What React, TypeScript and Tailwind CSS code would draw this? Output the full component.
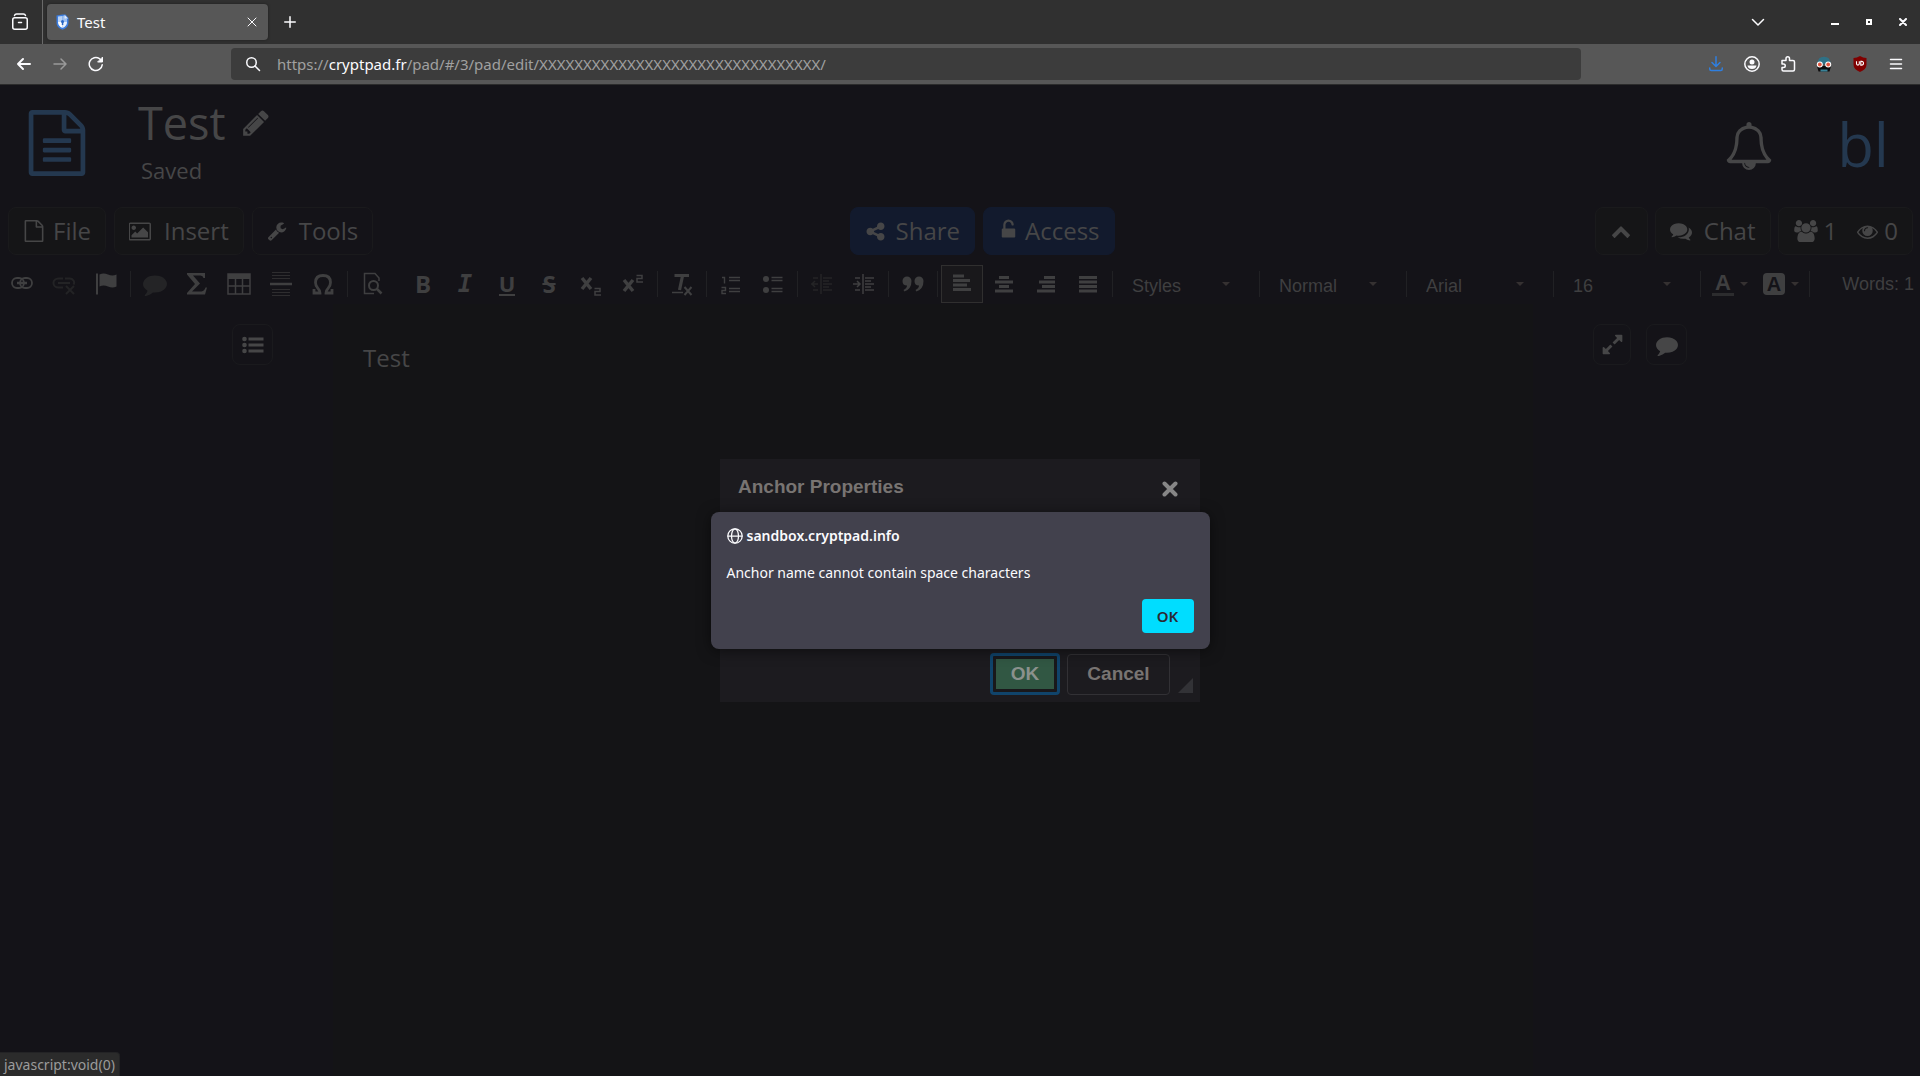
import type { ReactNode } from "react";

const paths = {
  file: "M1596 380q28 28 48 76t20 88v1152q0 40-28 68t-68 28h-1344q-40 0-68-28t-28-68v-1600q0-40 28-68t68-28h896q40 0 88 20t76 48zm-444-244v376h376q-10-29-22-41l-313-313q-12-12-41-22zm384 1528v-1024h-416q-40 0-68-28t-28-68v-416h-768v1536h1280z",
  fileLines:
    "M512 800q0-14 9-23t23-9h704q14 0 23 9t9 23v64q0 14-9 23t-23 9h-704q-14 0-23-9t-9-23v-64zm736 224q14 0 23 9t9 23v64q0 14-9 23t-23 9h-704q-14 0-23-9t-9-23v-64q0-14 9-23t23-9h704zm0 256q14 0 23 9t9 23v64q0 14-9 23t-23 9h-704q-14 0-23-9t-9-23v-64q0-14 9-23t23-9h704z",
  pencil:
    "M491 1536l91-91-235-235-91 91v107h128v128h107zm523-928q0-22-22-22-10 0-17 7l-542 542q-7 7-7 17 0 22 22 22 10 0 17-7l542-542q7-7 7-17zm-54-192l416 416-832 832h-416v-416zm683 96q0 53-37 90l-166 166-416-416 166-165q36-38 90-38 53 0 91 38l235 234q37 39 37 91z",
  picture:
    "M576 576q0 80-56 136t-136 56-136-56-56-136 56-136 136-56 136 56 56 136zm1024 384v448h-1408v-192l320-320 160 160 512-512zm96-704h-1600q-13 0-22.500 9.500t-9.500 22.500v1216q0 13 9.500 22.500t22.500 9.500h1600q13 0 22.500-9.500t9.500-22.500v-1216q0-13-9.500-22.500t-22.500-9.500zm160 32v1216q0 66-47 113t-113 47h-1600q-66 0-113-47t-47-113v-1216q0-66 47-113t113-47h1600q66 0 113 47t47 113z",
  wrench:
    "M448 1472q0-26-19-45t-45-19-45 19-19 45 19 45 45 19 45-19 19-45zm644-420l-682 682q-37 37-90 37-52 0-91-37l-106-108q-38-36-38-90 0-53 38-91l681-681q39 98 114.500 173.500t173.500 114.500zm634-435q0 39-23 106-47 134-164.500 217.500t-258.500 83.500q-185 0-316.500-131.500t-131.500-316.500 131.500-316.500 316.500-131.500q58 0 121.500 16.500t107.500 46.500q16 11 16 28t-16 28l-293 169v224l193 107q5-3 79-48.500t135.500-81 70.500-35.500q15 0 23.500 10t8.500 25z",
  share:
    "M1344 1024q133 0 226.500 93.500t93.500 226.500-93.500 226.500-226.500 93.500-226.500-93.500-93.500-226.500q0-12 2-34l-360-180q-92 86-218 86-133 0-226.500-93.500t-93.500-226.500 93.500-226.500 226.500-93.500q126 0 218 86l360-180q-2-22-2-34 0-133 93.500-226.500t226.500-93.500 226.500 93.500 93.500 226.500-93.500 226.500-226.500 93.500q-126 0-218-86l-360 180q2 22 2 34t-2 34l360 180q92-86 218-86z",
  unlock:
    "M1376 896q40 0 68 28t28 68v576q0 40-28 68t-68 28h-960q-40 0-68-28t-28-68v-576q0-40 28-68t68-28h32v-320q0-185 131.500-316.500t316.500-131.500 316.500 131.500 131.500 316.500q0 26-19 45t-45 19h-64q-26 0-45-19t-19-45q0-106-75-181t-181-75-181 75-75 181v320h736z",
  chevronUp:
    "M1683 1331l-166 165q-19 19-45 19t-45-19l-531-531-531 531q-19 19-45 19t-45-19l-166-165q-19-19-19-45.500t19-45.500l742-741q19-19 45-19t45 19l742 741q19 19 19 45.500t-19 45.500z",
  comment:
    "M1792 896q0 174-120 321.500t-326 233-450 85.500q-70 0-145-8-198 175-460 242-49 14-114 22-17 2-30.500-9t-17.500-29v-1q-3-4-.500-12t2-10 4.500-9.500l6-9 7-8.500 8-9q7-8 31-34.500t34.500-38 31-39.500 32.500-51 27-59 26-76q-157-89-247.500-220t-90.500-281q0-130 71-248.500t191-204.500 286-136.500 348-50.500q244 0 450 85.500t326 233 120 321.500z",
  comments:
    "M1408 768q0 139-94 257t-256.500 186.500-353.500 68.500q-86 0-176-16-124 88-278 128-36 9-86 16h-3q-11 0-20.500-8t-11.500-21q-1-3-1-6.500t.500-6.500 2-6l2.500-5 3.500-5.500 4-5 4.500-5 4-4.500q5-6 23-25t26-29.500 22.500-29 25-38.500 20.500-44q-124-72-195-177t-71-224q0-139 94-257t256.500-186.500 353.500-68.500 353.500 68.500 256.500 186.500 94 257zm384 256q0 120-71 224.500t-195 176.500q10 24 20.500 44t25 38.500 22.500 29 26 29.500 23 25q1 1 4 4.500t4.500 5 4 5 3.500 5.500l2.500 5 2 6 .500 6.500-1 6.500q-3 14-13 22t-22 7q-50-7-86-16-154-40-278-128-90 16-176 16-271 0-472-132 58 4 88 4 161 0 309-45t264-129q125-92 192-212t67-254q0-77-23-152 129 71 204 178t75 230z",
  eye: "M1664 960q-152-236-381-353 61 104 61 225 0 185-131.500 316.500t-316.500 131.500-316.500-131.500-131.500-316.500q0-121 61-225-229 117-381 353 133 205 333.500 326.500t434.500 121.500 434.500-121.500 333.500-326.500zm-720-384q0-20-14-34t-34-14q-125 0-214.500 89.500t-89.500 214.500q0 20 14 34t34 14 34-14 14-34q0-86 61-147t147-61q20 0 34-14t14-34zm848 384q0 34-20 69-140 230-376.500 368.500t-499.500 138.500-499.500-139-376.500-368q-20-35-20-69t20-69q140-229 376.500-368t499.500-139 499.500 139 376.500 368q20 35 20 69z",
  bell: "M912 1696q0-16-16-16-59 0-101.500-42.500t-42.500-101.500q0-16-16-16t-16 16q0 73 51.500 124.500t124.500 51.500q16 0 16-16zm-666-288h1300q-266-300-266-832 0-51-24-105t-69-103-121.500-80.500-169.500-31.500-169.500 31.500-121.500 80.500-69 103-24 105q0 532-266 832zm1482 0q0 52-38 90t-90 38h-448q0 106-75 181t-181 75-181-75-75-181h-448q-52 0-90-38t-38-90q50-42 91-88t85-119.500 74.500-158.500 50-206 19.500-260q0-152 117-282.500t307-158.500q-8-19-8-39 0-40 28-68t68-28 68 28 28 68q0 20-8 39 190 28 307 158.500t117 282.500q0 139 19.500 260t50 206 74.500 158.500 85 119.500 91 88z",
  users:
    "M593 896q-162 5-265 128h-134q-82 0-138-40.500t-56-118.500q0-353 124-353 6 0 43.500 21t97.500 42.500 119 21.500q67 0 133-23-5 37-5 66 0 139 81 256zm1071 637q0 120-73 189.500t-194 69.500h-874q-121 0-194-69.500t-73-189.500q0-53 3.500-103.500t14-109 26.500-108.500 43-97.500 62-81 85.500-53.500 111.500-20q10 0 43 21.500t73 48 107 48 135 21.500 135-21.500 107-48 73-48 43-21.500q61 0 111.500 20t85.500 53.500 62 81 43 97.500 26.500 108.500 14 109 3.500 103.500zm-1024-1277q0 106-75 181t-181 75-181-75-75-181 75-181 181-75 181 75 75 181zm704 384q0 159-112.500 271.500t-271.500 112.500-271.500-112.500-112.500-271.500 112.500-271.500 271.500-112.500 271.500 112.500 112.500 271.500zm576 225q0 78-56 118.500t-138 40.500h-134q-103-123-265-128 81-117 81-256 0-29-5-66 66 23 133 23 59 0 119-21.500t97.500-42.500 43.500-21q124 0 124 353zm-128-609q0 106-75 181t-181 75-181-75-75-181 75-181 181-75 181 75 75 181z",
  expand:
    "M883 1056q0 13-10 23l-332 332 144 144q19 19 19 45t-19 45-45 19h-448q-26 0-45-19t-19-45v-448q0-26 19-45t45-19 45 19l144 144 332-332q10-10 23-10t23 10l114 114q10 10 10 23zm781-864v448q0 26-19 45t-45 19-45-19l-144-144-332 332q-10 10-23 10t-23-10l-114-114q-10-10-10-23t10-23l332-332-144-144q-19-19-19-45t19-45 45-19h448q26 0 45 19t19 45z",
};

function Fa({ d, w = 1792, className = "size-6" }: { d: string; w?: number; className?: string }) {
  return (
    <svg viewBox={`0 0 ${w} 1792`} fill="currentColor" aria-hidden="true" className={`${className} shrink-0`}>
      <path d={d} />
    </svg>
  );
}

function Line({ children, size = 16, sw = 1.5 }: { children: ReactNode; size?: number; sw?: number }) {
  return (
    <svg
      width={size}
      height={size}
      viewBox={`0 0 ${size} ${size}`}
      fill="none"
      stroke="currentColor"
      strokeWidth={sw}
      strokeLinecap="round"
      strokeLinejoin="round"
      aria-hidden="true"
      className="shrink-0"
    >
      {children}
    </svg>
  );
}

function ChromeButton({ label, children, className = "w-9 text-[#fbfbfe]" }: { label: string; children: ReactNode; className?: string }) {
  return (
    <button type="button" aria-label={label} className={`flex h-9 shrink-0 items-center justify-center ${className}`}>
      {children}
    </button>
  );
}

function TabStrip() {
  return (
    <div className="flex h-11 items-center bg-[#303030] text-[#fbfbfe]">
      <ChromeButton label="View recent browsing" className="w-10">
        <Line size={18}>
          <path d="M3.500 2.500Q4 1 5.500 1h7q1.500 0 2 1.500" />
          <rect x="1.750" y="4.750" width="14.500" height="11.500" rx="2" />
          <path d="M7.500 9.500h3" />
        </Line>
      </ChromeButton>
      <div className="ml-0.5 h-11 w-px bg-[#6a6a6a]" />
      <div className="ml-1 flex h-9 w-[221px] items-center rounded bg-[#575757] pr-2 pl-[9px] shadow-[0_0_3px_#00000066]">
        <svg width="13" height="16" viewBox="0 0 13 16" aria-hidden="true">
          <path d="M.5 1.500 6.500.5h3L12.500 4v5q0 4.500-6 6.700Q.5 13.500.5 9z" fill="#3b7de0" />
          <path d="M2 2.500 6.500 2v6H2z" fill="#b9d3f7" />
          <path d="M6.500 8H11q0 4-4.500 6z" fill="#e8f0fc" />
          <path d="M2 8h4.500v6Q2 12 2 8z" fill="#fff" />
          <path d="M6.500 2 8 1.500 11 5v3H6.500z" fill="#9dc0f2" />
          <path d="M8.500.8 12.200 4.500H8.500z" fill="#dfeafb" />
          <circle cx="6.500" cy="7.500" r="1.500" fill="#2765c4" />
          <path d="M5.800 8h1.500v3H5.800z" fill="#2765c4" />
        </svg>
        <span className="ml-2 flex-1 text-[15px] leading-5">Test</span>
        <button type="button" aria-label="Close tab" className="flex size-4 items-center justify-center">
          <Line size={10} sw={1}>
            <path d="M1 1l8 8M9 1L1 9" />
          </Line>
        </button>
      </div>
      <ChromeButton label="New tab" className="ml-1 w-9">
        <Line size={12}>
          <path d="M6 .75v10.500M.75 6h10.500" />
        </Line>
      </ChromeButton>
      <ChromeButton label="List all tabs" className="ml-auto w-9">
        <Line size={14}>
          <path d="M1.500 4.500 7 10l5.500-5.500" />
        </Line>
      </ChromeButton>
      <div className="ml-[42px] flex">
        <ChromeButton label="Minimize" className="w-[34px]">
          <span className="mt-1 h-0.5 w-2 bg-white" />
        </ChromeButton>
        <ChromeButton label="Maximize" className="w-[34px]">
          <span className="size-1.5 border-2 border-white" />
        </ChromeButton>
        <ChromeButton label="Close window" className="w-[34px]">
          <Line size={8} sw={2}>
            <path d="M1 1l6 6M7 1L1 7" />
          </Line>
        </ChromeButton>
      </div>
    </div>
  );
}

function NavBar() {
  return (
    <div className="flex h-[41px] items-center border-b border-[#2c2c2c] bg-[#575757] px-1.5">
      <ChromeButton label="Back">
        <Line sw={2}>
          <path d="M14 8H2M7 3L2 8l5 5" />
        </Line>
      </ChromeButton>
      <ChromeButton label="Forward" className="w-9 text-[#9a9a9a]">
        <Line>
          <path d="M2 8h12M9 3l5 5-5 5" />
        </Line>
      </ChromeButton>
      <ChromeButton label="Reload">
        <Line>
          <path d="M14.200 8.800A6.500 6.500 0 1 1 11.500 2.700L13 4" />
          <path d="M14.500 1.500v4.500H10z" fill="currentColor" strokeWidth="1" />
        </Line>
      </ChromeButton>
      <div className="mr-[117px] ml-[117px] flex h-8 flex-1 items-center rounded bg-[#3c3c3c] pl-[14px] text-[#fbfbfe]">
        <Line>
          <circle cx="6.500" cy="6.500" r="4.750" />
          <path d="M10 10l4.500 4.500" />
        </Line>
        <div
          role="textbox"
          aria-label="Address"
          contentEditable
          suppressContentEditableWarning
          className="ml-4 flex-1 text-[15px] leading-5 text-[#a0a0a0] outline-none"
        >
          https://<span className="text-[#fbfbfe]">cryptpad.fr</span>/pad/#/3/pad/edit/XXXXXXXXXXXXXXXXXXXXXXXXXXXXXXXX/
        </div>
      </div>
      <ChromeButton label="Downloads" className="w-9 text-[#2f7fe0]">
        <Line>
          <path d="M8 .75V10M4 6.500 8 10.500l4-4M1.750 12v1q0 1.500 1.500 1.500h9.500q1.500 0 1.500-1.500v-1" />
        </Line>
      </ChromeButton>
      <ChromeButton label="Account">
        <Line>
          <circle cx="8" cy="8" r="7.200" />
          <circle cx="8" cy="6" r="2.500" fill="currentColor" stroke="none" />
          <path d="M3.500 9.500h9q-.5 3.500-4.500 3.500t-4.500-3.500z" fill="currentColor" stroke="none" />
        </Line>
      </ChromeButton>
      <ChromeButton label="Extensions">
        <Line>
          <path d="M2 4.500h4V2.500a1.750 1.750 0 0 1 3.500 0v2h3.500q1.500 0 1.500 1.500v7.500q0 1.500-1.500 1.500H3.500Q2 15 2 13.500V11.500h1.500a1.700 1.700 0 0 0 0-3.500H2z" />
        </Line>
      </ChromeButton>
      <ChromeButton label="Privacy extension">
        <svg width="16" height="16" viewBox="0 0 16 16" aria-hidden="true">
          <path d="M1.500 8Q1.500.8 8 .8T14.500 8z" fill="#2f7186" />
          <path d="M1 10h14l-1.500 5.500h-11z" fill="#0c0c0d" />
          <circle cx="3.800" cy="8.500" r="3" fill="#fff" />
          <circle cx="12.200" cy="8.500" r="3" fill="#fff" />
          <circle cx="3.800" cy="8.500" r="1.900" fill="#e0553f" />
          <circle cx="12.200" cy="8.500" r="1.900" fill="#e0553f" />
          <path d="M4.500 13.500h7v2h-7z" fill="#3a8398" />
        </svg>
      </ChromeButton>
      <ChromeButton label="Ad blocker">
        <svg width="16" height="16" viewBox="0 0 16 16" aria-hidden="true">
          <path d="M8 0q3 2 6.500 2v6.500q0 5-6.500 7.500Q1.500 13.500 1.500 8.500V2Q5 2 8 0z" fill="#800000" />
          <path d="M4.500 5.200v2.400q0 1.500 1.400 1.500t1.400-1.500V5.200M8.800 5.400v3.700h.7q2 0 2-1.900t-2-1.800z" fill="none" stroke="#fff" strokeWidth="1.100" />
        </svg>
      </ChromeButton>
      <ChromeButton label="Application menu">
        <Line size={14}>
          <path d="M1.500 2.500h11M1.500 7h11M1.500 11.500h11" />
        </Line>
      </ChromeButton>
    </div>
  );
}

function PadButton({ children, className = "border-[#1a1a1c] bg-[#151517]" }: { children: ReactNode; className?: string }) {
  return (
    <button type="button" className={`flex h-12 items-center rounded-lg border px-3.5 text-2xl ${className}`}>
      {children}
    </button>
  );
}

function PadHeader() {
  return (
    <header className="font-['Open_Sans',sans-serif] text-[#464647]">
      <div className="flex h-[121px] items-start pt-2.5 pr-[31px] pl-6">
        <svg viewBox="0 0 1792 1792" fill="#24384f" aria-hidden="true" className="mt-[15px] size-[66px] shrink-0">
          <path d={paths.file} />
          <path d={paths.fileLines} />
        </svg>
        <div className="ml-12">
          <div className="flex items-center">
            <h1 className="text-[45px] leading-[56px]">Test</h1>
            <button type="button" aria-label="Edit title" className="ml-[15px]">
              <Fa d={paths.pencil} className="size-[30px]" />
            </button>
          </div>
          <p className="ml-[3px] text-[22px] leading-[38px]">Saved</p>
        </div>
        <button type="button" aria-label="Notifications" className="mt-[27px] ml-auto">
          <Fa d={paths.bell} className="size-12" />
        </button>
        <button type="button" aria-label="User menu" className="mt-[13px] ml-16 text-[60px] leading-[72px] text-[#24384f]">
          bl
        </button>
      </div>
      <div className="flex items-center pt-px pr-[7px] pl-2">
        <div className="flex gap-2">
          <PadButton>
            <Fa d={paths.file} className="size-[22px]" />
            <span className="ml-2">File</span>
          </PadButton>
          <PadButton>
            <Fa d={paths.picture} w={1920} className="h-[21px] w-[23px]" />
            <span className="ml-3">Insert</span>
          </PadButton>
          <PadButton className="border-[#1a1a1c] bg-[#141318]">
            <Fa d={paths.wrench} className="size-5" />
            <span className="ml-3">Tools</span>
          </PadButton>
        </div>
        <div className="mx-auto flex gap-2 pr-1">
          <PadButton className="border-[#121a2d] bg-[#121a2d]">
            <Fa d={paths.share} className="size-[21px]" />
            <span className="ml-2.5">Share</span>
          </PadButton>
          <PadButton className="border-[#121a2d] bg-[#121a2d]">
            <Fa d={paths.unlock} className="mb-1.5 size-[21px]" />
            <span className="ml-1.5">Access</span>
          </PadButton>
        </div>
        <div className="flex gap-[7px]">
          <button type="button" aria-label="Collapse toolbar" className="flex h-12 w-[53px] items-center justify-center rounded-lg border border-[#1a1a1c] bg-[#151517]">
            <Fa d={paths.chevronUp} className="size-5" />
          </button>
          <PadButton>
            <Fa d={paths.comments} className="size-[22px]" />
            <span className="ml-3">Chat</span>
          </PadButton>
          <PadButton>
            <Fa d={paths.users} w={1920} className="ml-px h-[22px] w-6" />
            <span className="ml-1.5">1</span>
            <Fa d={paths.eye} className="ml-5 size-[21px]" />
            <span className="ml-1.5">0</span>
          </PadButton>
        </div>
      </div>
    </header>
  );
}

function Tool({ label, children, className = "" }: { label: string; children: ReactNode; className?: string }) {
  return (
    <button type="button" aria-label={label} className={`flex h-[38px] w-[42px] shrink-0 items-center justify-center leading-none ${className}`}>
      {children}
    </button>
  );
}

function Glyph({ children }: { children: ReactNode }) {
  return (
    <svg width="24" height="24" viewBox="0 0 24 24" fill="none" stroke="currentColor" strokeWidth="2" aria-hidden="true">
      {children}
    </svg>
  );
}

function Sep() {
  return <div className="mx-[3px] h-[26px] w-px shrink-0 bg-[#212124]" />;
}

function Caret() {
  return (
    <svg width="8" height="4" viewBox="0 0 8 4" fill="#353131" aria-hidden="true" className="shrink-0">
      <path d="M0 0h8L4 4z" />
    </svg>
  );
}

function Combo({ label, value }: { label: string; value: string }) {
  return (
    <div className="flex w-[140px] shrink-0 items-center pr-[26px] pl-4">
      <select aria-label={label} className="mt-1 min-w-0 flex-1 appearance-none bg-transparent text-lg leading-6 outline-none">
        <option>{value}</option>
      </select>
      <Caret />
    </div>
  );
}

function EditorToolbar() {
  return (
    <div role="toolbar" aria-label="Editor toolbar" className="mt-[9px] flex h-10 items-center overflow-hidden pl-px font-['Liberation_Sans',Arial,sans-serif] text-[#3f3f40]">
      <Tool label="Link">
        <Glyph>
          <rect x="2" y="6" width="12" height="10" rx="5" strokeWidth="1.800" />
          <rect x="10" y="6" width="12" height="10" rx="5" strokeWidth="1.800" />
          <path d="M7 11h10" strokeWidth="2.500" />
        </Glyph>
      </Tool>
      <Tool label="Unlink" className="text-[#232325]">
        <Glyph>
          <path d="M11 15.500H6.500a4.500 4 0 0 1 0-9H11M13 6.500h4.500a4.500 4 0 0 1 4 6M6 11h12" />
          <path d="M14 14l8 8M22 14l-8 8" />
        </Glyph>
      </Tool>
      <Tool label="Anchor">
        <Glyph>
          <path d="M3 1.500v21" />
          <path d="M5.500 2.500q4-2 8.500 0t8.500 0v12q-4 2-8.500 0t-8.500 0z" fill="currentColor" stroke="none" />
        </Glyph>
      </Tool>
      <Sep />
      <Tool label="Comment" className="text-[#242426]">
        <Fa d={paths.comment} className="size-6" />
      </Tool>
      <Tool label="Math">
        <Glyph>
          <path d="M2 1h18v5h-1.500q-.5-2.500-3-2.500H8l7 8-8 8h9.500q3-.5 4-4H22L20 22.500H2V21l8-9L2 2.500z" fill="currentColor" stroke="none" />
        </Glyph>
      </Tool>
      <Tool label="Table">
        <Glyph>
          <path d="M1 2h22v20H1zM1 14h22M8.500 6v16M15.500 6v16" strokeWidth="1.500" />
          <path d="M1 2h22v5H1z" fill="currentColor" stroke="none" />
        </Glyph>
      </Tool>
      <Tool label="Horizontal line">
        <Glyph>
          <path d="M3 .5h18M3 3.500h18M3 6.500h18M3 17.500h18M3 20.500h18M3 23.500h18" strokeWidth="1" opacity=".6" />
          <path d="M1 12h22" strokeWidth="2.500" />
        </Glyph>
      </Tool>
      <Tool label="Special character">
        <Glyph>
          <path d="M3 17v4h6q0-2.500-2-4.500-2.500-2.500-2.500-6Q4.500 3.500 12 3.500t7.500 7q0 3.500-2.500 6-2 2-2 4.500h6v-4" strokeWidth="2.800" />
        </Glyph>
      </Tool>
      <Sep />
      <Tool label="Preview">
        <Glyph>
          <path d="M19 9V6l-4-4.500H4.500v20H14" strokeWidth="1.500" />
          <circle cx="13.500" cy="13.500" r="4.500" />
          <path d="M16.500 16.500l5 5" strokeWidth="2.500" />
        </Glyph>
      </Tool>
      <Tool label="Bold" className="ml-[9px] font-['Open_Sans'] text-2xl font-bold">
        B
      </Tool>
      <Tool label="Italic" className="font-['DejaVu_Sans_Mono'] text-2xl font-bold italic">
        I
      </Tool>
      <Tool label="Underline" className="font-['Open_Sans'] text-[22px] font-bold">
        <span className="border-b-2 border-current">U</span>
      </Tool>
      <Tool label="Strikethrough" className="font-['Open_Sans'] text-2xl font-bold line-through decoration-2">
        S
      </Tool>
      <Tool label="Subscript">
        <Glyph>
          <path d="M3 6l9 11M12 6L3 17" strokeWidth="3.500" />
          <path d="M15.500 16.500h5.500v3h-5v3.500h6" strokeWidth="1.500" />
        </Glyph>
      </Tool>
      <Tool label="Superscript">
        <Glyph>
          <path d="M3 8l9 11M12 8L3 19" strokeWidth="3.500" />
          <path d="M15.500 3.500h5.500v3h-5v3.500h6" strokeWidth="1.500" />
        </Glyph>
      </Tool>
      <Sep />
      <Tool label="Remove format">
        <Glyph>
          <path d="M4.500 3.500H19M12.500 4L9.500 18" strokeWidth="3.200" />
          <path d="M2 20.500h11" strokeWidth="1.500" />
          <path d="M14.500 15l7 8M21.500 15l-7 8" />
        </Glyph>
      </Tool>
      <Sep />
      <Tool label="Numbered list">
        <Glyph>
          <path d="M3 5.500h2.500v6M2.500 15.500h4v3h-3.500v3h4" strokeWidth="1.400" />
          <path d="M10 5.500h11M10 8.500h11M10 16.500h11M10 19.500h11" strokeWidth="1.600" />
        </Glyph>
      </Tool>
      <Tool label="Bulleted list">
        <Glyph>
          <circle cx="5" cy="7" r="3" fill="currentColor" stroke="none" />
          <circle cx="5" cy="18" r="3" fill="currentColor" stroke="none" />
          <path d="M10.500 5.500h11M10.500 8.500h11M10.500 16.500h11M10.500 19.500h11" strokeWidth="1.600" />
        </Glyph>
      </Tool>
      <Sep />
      <Tool label="Decrease indent" className="text-[#242426]">
        <Glyph>
          <path d="M11 2v20M1 12h7M5 9l-3 3 3 3M13 6h9M13 9h6M13 12h9M13 15h6M13 18h9M3 6h5M3 18h5" strokeWidth="1.500" />
        </Glyph>
      </Tool>
      <Tool label="Increase indent">
        <Glyph>
          <path d="M11 2v20M1 12h7M5 9l3 3-3 3M13 6h9M13 9h6M13 12h9M13 15h6M13 18h9M3 6h5M3 18h5" strokeWidth="1.500" />
        </Glyph>
      </Tool>
      <Sep />
      <Tool label="Block quote">
        <Glyph>
          <path d="M1.500 9a4.500 4.500 0 1 1 9 0q0 8-7 10.500l-1-1.500q3.500-2 3.500-4.500-4.500 0-4.500-4.500zM13.500 9a4.500 4.500 0 1 1 9 0q0 8-7 10.500l-1-1.500q3.500-2 3.500-4.500-4.500 0-4.500-4.500z" fill="currentColor" stroke="none" />
        </Glyph>
      </Tool>
      <Sep />
      <Tool label="Align left" className="border border-[#302f2f] bg-[#19181b]">
        <Glyph>
          <path d="M3 4h11M3 8.500h17M3 13h14M3 17.500h18" strokeWidth="3" />
        </Glyph>
      </Tool>
      <Tool label="Align center">
        <Glyph>
          <path d="M7 5.500h10M3 10h18M7 14.500h10M3 19h18" strokeWidth="3" />
        </Glyph>
      </Tool>
      <Tool label="Align right">
        <Glyph>
          <path d="M10 5.500h11M5 10h16M8 14.500h13M3 19h18" strokeWidth="3" />
        </Glyph>
      </Tool>
      <Tool label="Justify">
        <Glyph>
          <path d="M3 5.500h18M3 10h18M3 14.500h18M3 19h18" strokeWidth="3" />
        </Glyph>
      </Tool>
      <Sep />
      <Combo label="Styles" value="Styles" />
      <Sep />
      <Combo label="Paragraph format" value="Normal" />
      <Sep />
      <Combo label="Font" value="Arial" />
      <Sep />
      <Combo label="Size" value="16" />
      <Sep />
      <button type="button" aria-label="Text color" className="flex w-[51px] shrink-0 items-center pl-2">
        <span className="mr-1.5 w-[22px] border-b-[3px] border-[#2c2c2e] text-[22px] leading-[20px] font-bold">A</span>
        <Caret />
      </button>
      <button type="button" aria-label="Background color" className="flex w-[51px] shrink-0 items-center pl-2">
        <span className="mr-1.5 w-[22px] rounded bg-current">
          <span className="block text-xl leading-[22px] font-bold text-[#141318]">A</span>
        </span>
        <Caret />
      </button>
      <Sep />
      <span className="ml-auto pr-1.5 text-lg leading-6 whitespace-nowrap">Words: 1</span>
    </div>
  );
}

function SideButton({ label, children, className = "w-[41px]" }: { label: string; children: ReactNode; className?: string }) {
  return (
    <button type="button" aria-label={label} className={`flex h-[41px] items-center justify-center rounded-lg border border-[#1a1a1d] ${className}`}>
      {children}
    </button>
  );
}

function Document() {
  return (
    <main className="flex flex-1 text-[#464647]">
      <aside className="flex w-[333px] shrink-0 justify-end pt-5 pr-[60px]">
        <SideButton label="Table of contents">
          <svg width="22" height="18" viewBox="0 0 22 18" fill="currentColor" aria-hidden="true">
            <circle cx="2.500" cy="3" r="2.300" />
            <circle cx="2.500" cy="9" r="2.300" />
            <circle cx="2.500" cy="15" r="2.300" />
            <path d="M6.500 1.500h15v3h-15zM6.500 7.500h15v3h-15zM6.500 13.500h15v3h-15z" />
          </svg>
        </SideButton>
      </aside>
      <article className="min-w-0 flex-1 bg-[#141416] px-[30px] pt-9 font-['Open_Sans',sans-serif] text-2xl leading-9">
        <p>Test</p>
      </article>
      <aside className="flex w-[387px] shrink-0 items-start gap-[15px] pt-5 pl-[60px]">
        <SideButton label="Expand" className="w-[38px]">
          <Fa d={paths.expand} className="size-[23px]" />
        </SideButton>
        <SideButton label="Comments">
          <Fa d={paths.comment} className="size-[22px]" />
        </SideButton>
      </aside>
    </main>
  );
}

function AnchorDialog() {
  return (
    <section
      role="dialog"
      aria-label="Anchor Properties"
      className="col-start-1 row-start-1 flex h-[243px] w-[480px] flex-col justify-between bg-[#1c1b1f] font-['Liberation_Sans',Arial,sans-serif] font-bold text-[#787472]"
    >
      <div className="flex items-center justify-between pt-4 pr-[22px] pl-[18px]">
        <h2 className="text-[19px] leading-6">Anchor Properties</h2>
        <button type="button" aria-label="Close" className="mt-1 text-[#868686]">
          <svg width="16" height="16" viewBox="0 0 16 16" stroke="currentColor" strokeWidth="4" strokeLinecap="round" aria-hidden="true">
            <path d="M2.500 2.500l11 11M13.500 2.500l-11 11" />
          </svg>
        </button>
      </div>
      <div className="flex items-end justify-end pr-[7px] pb-[7px] text-[19px] leading-6">
        <button type="button" className="h-[42px] w-[70px] rounded-sm border-[3px] border-[#10446b] bg-[#19181b] p-[3px] text-[#8b918d]">
          <span className="block bg-[#315743] leading-[30px]">OK</span>
        </button>
        <button type="button" className="ml-[7px] h-[41px] w-[103px] self-center rounded-sm border border-[#323135]">
          Cancel
        </button>
        <svg width="15" height="15" viewBox="0 0 15 15" fill="#323236" aria-hidden="true" className="mb-0.5 ml-2">
          <path d="M15 0v15H0z" />
        </svg>
      </div>
    </section>
  );
}

function AlertDialog() {
  return (
    <section
      role="alertdialog"
      aria-label="sandbox.cryptpad.info"
      className="z-10 col-start-1 row-start-1 w-[499px] rounded-lg bg-[#42414d] px-4 pt-[15px] pb-4 text-sm leading-5 text-[#fbfbfe] shadow-[0_2px_14px_#00000080]"
    >
      <h2 className="flex items-center gap-1 leading-[18px] font-semibold">
        <Line sw={1.250}>
          <circle cx="8" cy="8" r="7.200" />
          <ellipse cx="8" cy="8" rx="3.500" ry="7.200" />
          <path d="M1 8h14" />
        </Line>
        sandbox.cryptpad.info
      </h2>
      <p className="mt-[18px]">Anchor name cannot contain space characters</p>
      <div className="mt-4 flex justify-end">
        <button type="button" className="h-[34px] w-[52px] rounded bg-[#00ddff] text-[15px] font-semibold text-[#2b2a33]">
          OK
        </button>
      </div>
    </section>
  );
}

export default function App() {
  return (
    <div className="flex min-h-screen flex-col bg-[#141318] font-['Noto_Sans',sans-serif]">
      <TabStrip />
      <NavBar />
      <div className="relative flex flex-1 flex-col">
        <PadHeader />
        <EditorToolbar />
        <Document />
        <div className="absolute inset-0 grid place-content-center place-items-center">
          <AnchorDialog />
          <AlertDialog />
        </div>
        <div className="absolute bottom-0 left-0 rounded-tr border-t border-r border-[#232325] bg-[#2b2b2b] px-1 text-sm leading-[23px] text-[#9b9b9b]">
          javascript:void(0)
        </div>
      </div>
    </div>
  );
}
